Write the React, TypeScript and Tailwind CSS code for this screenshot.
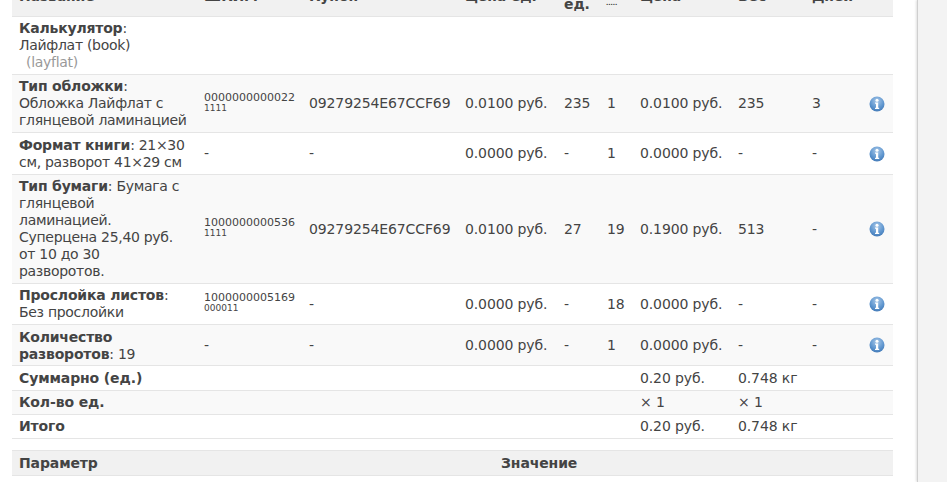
import React from 'react';

const rows = [
  {
    name: <><b>Тип обложки</b>: Обложка Лайфлат с глянцевой ламинацией</>,
    code: ['0000000000022', '1111'], coupon: '09279254E67CCF69', unit: '0.0100 руб.', per: '235', qty: '1', price: '0.0100 руб.', weight: '235', days: '3', bg: 'bg-[#f9f9f9]', nudge: '',
  },
  {
    name: <><b>Формат книги</b>: 21×30 см, разворот 41×29 см</>,
    code: null, coupon: '-', unit: '0.0000 руб.', per: '-', qty: '1', price: '0.0000 руб.', weight: '-', days: '-', bg: 'bg-white h-[42px]', nudge: '',
  },
  {
    name: <><b>Тип бумаги</b>: Бумага с глянцевой ламинацией. Суперцена 25,40 руб. от 10 до 30<br />разворотов.</>,
    code: ['1000000000536', '1111'], coupon: '09279254E67CCF69', unit: '0.0100 руб.', per: '27', qty: '19', price: '0.1900 руб.', weight: '513', days: '-', bg: 'bg-[#f9f9f9]', nudge: '',
  },
  {
    name: <><b>Прослойка листов</b>: Без прослойки</>,
    code: ['1000000005169', '000011'], coupon: '-', unit: '0.0000 руб.', per: '-', qty: '18', price: '0.0000 руб.', weight: '-', days: '-', bg: 'bg-white', nudge: '',
  },
  {
    name: <><b>Количество разворотов</b>: 19</>,
    code: null, coupon: '-', unit: '0.0000 руб.', per: '-', qty: '1', price: '0.0000 руб.', weight: '-', days: '-', bg: 'bg-[#f9f9f9]', nudge: 'pt-[4px] pb-[2px]',
  },
];

const totals = [
  { label: 'Суммарно (ед.)', price: '0.20 руб.', weight: '0.748 кг', bg: 'bg-white h-[25px]' },
  { label: 'Кол-во ед.', price: '× 1', weight: '× 1', bg: 'bg-[#f9f9f9]' },
  { label: 'Итого', price: '0.20 руб.', weight: '0.748 кг', bg: 'bg-white' },
];

function InfoIcon() {
  return (
    <svg width="16" height="16" viewBox="0 0 16 16" className="block">
      <defs>
        <radialGradient id="info" cx="50%" cy="30%" r="75%">
          <stop offset="0%" stopColor="#a9c8e8" />
          <stop offset="60%" stopColor="#5f96cf" />
          <stop offset="100%" stopColor="#3f76b4" />
        </radialGradient>
      </defs>
      <circle cx="8" cy="8" r="7.5" fill="url(#info)" />
      <circle cx="8" cy="4.2" r="1.5" fill="#fff" />
      <path d="M6 6.6h3.2v5.2h1v1.2H6v-1.2h1V7.8H6z" fill="#fff" />
    </svg>
  );
}

const td = 'border-b border-[#e5e5e5] px-[7px] py-[3px] align-middle';
const nameTd = `${td} tracking-[-0.3px] [&_b]:tracking-[-0.2px]`;

export default function App() {
  return (
    <div className="flex h-[482px] w-[947px] overflow-hidden bg-white font-['DejaVu_Sans',sans-serif] text-[14px] leading-[17px] tracking-[-0.12px] text-[#444]">
      <div className="w-[917px] shrink-0 pl-3 pr-6">
        <table className="-mt-[24px] w-[881px] table-fixed border-collapse">
          <colgroup>
            <col className="w-[185px]" />
            <col className="w-[105px]" />
            <col className="w-[156px]" />
            <col className="w-[99px]" />
            <col className="w-[43px]" />
            <col className="w-[33px]" />
            <col className="w-[98px]" />
            <col className="w-[74px]" />
            <col className="w-[57px]" />
            <col className="w-[31px]" />
          </colgroup>
          <thead>
            <tr className="bg-[#f1f1f1] text-left font-bold">
              <th className={td}>Название</th>
              <th className={td}>ШКИМ</th>
              <th className={td}>Купон</th>
              <th className={td}>Цена ед.</th>
              <th className={td}>Вес<br />ед.</th>
              <th className="border-b border-[#e5e5e5] px-[6px] pb-[5px] align-bottom text-[6px] tracking-normal text-[#333]">.....</th>
              <th className={td}>Цена</th>
              <th className={td}>Вес</th>
              <th className={td}>Дней</th>
              <th className={td}></th>
            </tr>
          </thead>
          <tbody>
            <tr className="bg-white">
              <td className={nameTd}>
                <b>Калькулятор</b>: Лайфлат (book)
                <br />
                <span className="pl-[7px] text-[#999]">(layflat)</span>
              </td>
              <td className={td} colSpan={9}></td>
            </tr>
            {rows.map((row, i) => (
              <tr key={i} className={row.bg}>
                <td className={`${nameTd} ${row.nudge}`}>{row.name}</td>
                <td className={td}>
                  {row.code ? (
                    <div className="pb-[2px] text-[11px] leading-[11px] tracking-normal">
                      {row.code[0]}
                      <div className="text-[9px]">{row.code[1]}</div>
                    </div>
                  ) : '-'}
                </td>
                <td className={td}>{row.coupon}</td>
                <td className={td}>{row.unit}</td>
                <td className={td}>{row.per}</td>
                <td className={td}>{row.qty}</td>
                <td className={td}>{row.price}</td>
                <td className={td}>{row.weight}</td>
                <td className={td}>{row.days}</td>
                <td className={td}><InfoIcon /></td>
              </tr>
            ))}
            {totals.map((row) => (
              <tr key={row.label} className={row.bg}>
                <td className={`${td} font-bold`} colSpan={6}>{row.label}</td>
                <td className={td}>{row.price}</td>
                <td className={td} colSpan={3}>{row.weight}</td>
              </tr>
            ))}
          </tbody>
        </table>
        <div className="mt-[11px] grid h-[26px] w-[881px] grid-cols-[482px_1fr] items-center border-y border-[#e5e5e5] bg-[#f1f1f1] px-[7px] font-bold">
          <span>Параметр</span>
          <span>Значение</span>
        </div>
      </div>
      <div className="grow border-l border-[#cfcfcf] bg-[#f3f3f3] shadow-[-1px_0_2px_rgba(0,0,0,0.12)]"></div>
    </div>
  );
}
